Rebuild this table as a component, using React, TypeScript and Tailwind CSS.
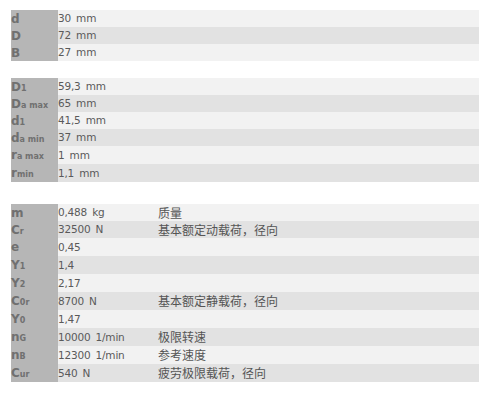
type Row = { sym: string; sub?: string; value: string; desc?: string; h?: string };

const BLOCK_1: Row[] = [
  { sym: "d", value: "30 mm" },
  { sym: "D", value: "72 mm" },
  { sym: "B", value: "27 mm" },
];

const BLOCK_2: Row[] = [
  { sym: "D", sub: "1", value: "59,3 mm" },
  { sym: "D", sub: "a max", value: "65 mm" },
  { sym: "d", sub: "1", value: "41,5 mm" },
  { sym: "d", sub: "a min", value: "37 mm" },
  { sym: "r", sub: "a max", value: "1 mm", h: "h-[18px]" },
  { sym: "r", sub: "min", value: "1,1 mm", h: "h-[18px]" },
];

const BLOCK_3: Row[] = [
  { sym: "m", value: "0,488 kg", desc: "质量" },
  { sym: "C", sub: "r", value: "32500 N", desc: "基本额定动载荷，径向" },
  { sym: "e", value: "0,45", h: "h-[18px]" },
  { sym: "Y", sub: "1", value: "1,4", h: "h-[18px]" },
  { sym: "Y", sub: "2", value: "2,17", h: "h-[18px]" },
  { sym: "C", sub: "0r", value: "8700 N", desc: "基本额定静载荷，径向", h: "h-[18px]" },
  { sym: "Y", sub: "0", value: "1,47", h: "h-[18px]" },
  { sym: "n", sub: "G", value: "10000 1/min", desc: "极限转速", h: "h-[18px]" },
  { sym: "n", sub: "B", value: "12300 1/min", desc: "参考速度", h: "h-[18px]" },
  { sym: "C", sub: "ur", value: "540 N", desc: "疲劳极限载荷，径向", h: "h-[18px]" },
];

function Block({ rows }: { rows: Row[] }) {
  return (
    <div className="flex flex-col">
      {rows.map((r, i) => (
        <div
          key={i}
          className={`flex items-center ${r.h ?? "h-[17px]"} ${i % 2 === 0 ? "bg-[#f2f2f2]" : "bg-[#e2e2e2]"}`}
        >
          <div className="w-[47px] h-full flex items-center bg-[#b6b6b6] text-[#707070] font-bold text-[12px] leading-none">
            <span>{r.sym}</span>
            {r.sub && (
              <span className="text-[8px] font-bold relative top-[2px] whitespace-pre">{r.sub}</span>
            )}
          </div>
          <div className="w-[100px] text-[10.5px] tracking-[-0.2px] [word-spacing:2px] text-[#5a5a5a] whitespace-pre leading-none">
            {r.value}
          </div>
          <div className="flex-1 text-[12px] text-[#555] leading-none font-['Noto_Sans_CJK_SC',sans-serif]">
            {r.desc}
          </div>
        </div>
      ))}
    </div>
  );
}

export default function App() {
  return (
    <div className="w-[488px] h-[395px] bg-white font-['DejaVu_Sans',sans-serif]">
      <div className="ml-[11px] w-[468px] pt-[10px] flex flex-col">
        <Block rows={BLOCK_1} />
        <div className="h-[17px]" />
        <Block rows={BLOCK_2} />
        <div className="h-[22px]" />
        <Block rows={BLOCK_3} />
      </div>
    </div>
  );
}
